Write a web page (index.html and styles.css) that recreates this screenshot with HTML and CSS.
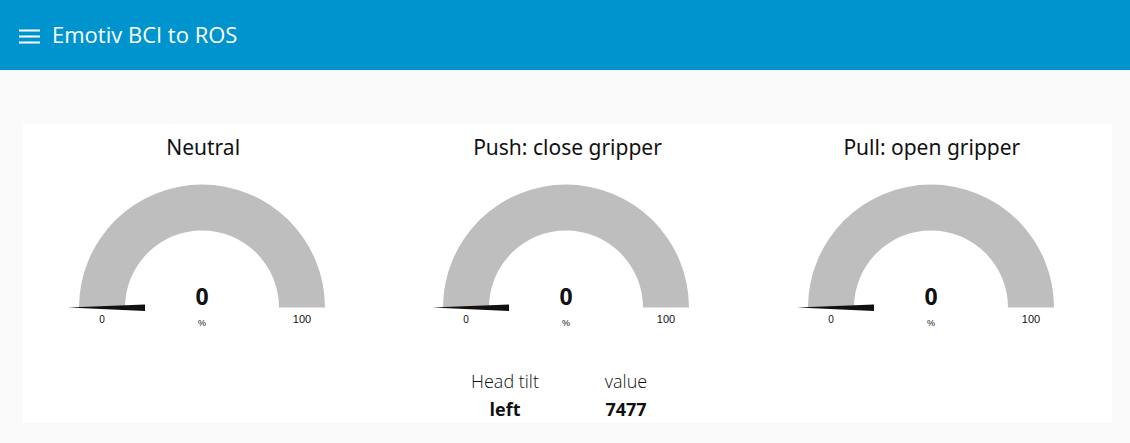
FILE: index.html
```html
<!DOCTYPE html>
<html lang="en">
<head>
<meta charset="utf-8">
<meta name="viewport" content="width=device-width, initial-scale=1">
<title>Emotiv BCI to ROS</title>
<link rel="stylesheet" href="styles.css">
</head>
<body>
<header class="toolbar">
  <button class="menu-button" type="button" aria-label="Menu">
    <svg class="menu-icon" width="21" height="15" viewBox="0 0 21 15" aria-hidden="true">
      <path d="M0 0.500h21v2H0zM0 6.500h21v2H0zM0 12.500h21v2H0z" fill="currentColor"/>
    </svg>
  </button>
  <h1 class="toolbar-title">Emotiv BCI to ROS</h1>
</header>
<main class="content">
  <section class="card">
    <div class="gauges">
      <article class="gauge">
        <h2 class="gauge-title">Neutral</h2>
        <svg class="gauge-dial" viewBox="0 0 272 150" role="img" aria-label="Neutral: 0 %">
          <path class="dial-track" d="M12 127.500a123 123 0 0 1 246 0h-46a77 77 0 0 0-154 0z"/>
          <path class="dial-needle" d="M1 127.500L78 124.500V131z"/>
          <text class="dial-value" x="135" y="125">0</text>
          <text class="dial-unit" x="135" y="146">%</text>
          <text class="dial-min" x="35" y="143">0</text>
          <text class="dial-max" x="235" y="143">100</text>
        </svg>
      </article>
      <article class="gauge">
        <h2 class="gauge-title">Push: close gripper</h2>
        <svg class="gauge-dial" viewBox="0 0 272 150" role="img" aria-label="Push: 0 %">
          <path class="dial-track" d="M12 127.500a123 123 0 0 1 246 0h-46a77 77 0 0 0-154 0z"/>
          <path class="dial-needle" d="M1 127.500L78 124.500V131z"/>
          <text class="dial-value" x="135" y="125">0</text>
          <text class="dial-unit" x="135" y="146">%</text>
          <text class="dial-min" x="35" y="143">0</text>
          <text class="dial-max" x="235" y="143">100</text>
        </svg>
      </article>
      <article class="gauge">
        <h2 class="gauge-title">Pull: open gripper</h2>
        <svg class="gauge-dial" viewBox="0 0 272 150" role="img" aria-label="Pull: 0 %">
          <path class="dial-track" d="M12 127.500a123 123 0 0 1 246 0h-46a77 77 0 0 0-154 0z"/>
          <path class="dial-needle" d="M1 127.500L78 124.500V131z"/>
          <text class="dial-value" x="135" y="125">0</text>
          <text class="dial-unit" x="135" y="146">%</text>
          <text class="dial-min" x="35" y="143">0</text>
          <text class="dial-max" x="235" y="143">100</text>
        </svg>
      </article>
    </div>
    <div class="readings">
      <table class="readings-table">
        <thead>
          <tr><th scope="col">Head tilt</th><th scope="col">value</th></tr>
        </thead>
        <tbody>
          <tr><td>left</td><td>7477</td></tr>
        </tbody>
      </table>
    </div>
  </section>
</main>
</body>
</html>
```
FILE: styles.css
```css
* {
  box-sizing: border-box;
}

body {
  margin: 0;
  background: #fafafa;
  color: #111;
  font-family: "Open Sans", "Noto Sans", sans-serif;
}

.toolbar {
  display: flex;
  align-items: center;
  gap: 12px;
  height: 70px;
  padding: 0 19px 2px;
  background: #0094ce;
  color: #fff;
}

.menu-button {
  display: flex;
  padding: 5px 0 0;
  border: 0;
  background: none;
  color: inherit;
  cursor: pointer;
}

.toolbar-title {
  margin: 0;
  font-size: 22px;
  font-weight: 400;
  line-height: 30px;
}

.content {
  padding: 54px 18px 20px 23px;
}

.card {
  background: #fff;
}

.gauges {
  display: grid;
  grid-template-columns: repeat(3, 1fr);
  gap: 4px;
}

.gauge {
  display: flex;
  flex-direction: column;
  align-items: center;
  gap: 18px;
  padding-top: 8px;
}

.gauge-title {
  margin: 0;
  font-family: "Noto Sans", "Open Sans", sans-serif;
  font-size: 21px;
  font-weight: 400;
  line-height: 30px;
}

.gauge-dial {
  display: block;
  width: 100%;
  max-width: 272px;
}

.dial-track {
  fill: #bebebe;
}

.dial-needle,
.gauge-dial text {
  fill: #111;
}

.gauge-dial text {
  font-family: "Liberation Sans", Arial, sans-serif;
  font-size: 10px;
  text-anchor: middle;
}

.gauge-dial .dial-value {
  font-family: "Open Sans", "Noto Sans", sans-serif;
  font-size: 23px;
  font-weight: 700;
}

.gauge-dial .dial-unit {
  font-size: 9px;
}

.gauge-dial .dial-max {
  font-size: 11px;
}

.readings {
  display: flex;
  justify-content: center;
  padding: 37px 4px 0 0;
}

.readings-table {
  border-collapse: collapse;
  table-layout: fixed;
  width: 242px;
  text-align: center;
  line-height: 28px;
}

.readings-table th {
  padding: 0;
  font-size: 18px;
  font-weight: 300;
}

.readings-table td {
  padding: 0;
  font-size: 18px;
  font-weight: 700;
}
```
